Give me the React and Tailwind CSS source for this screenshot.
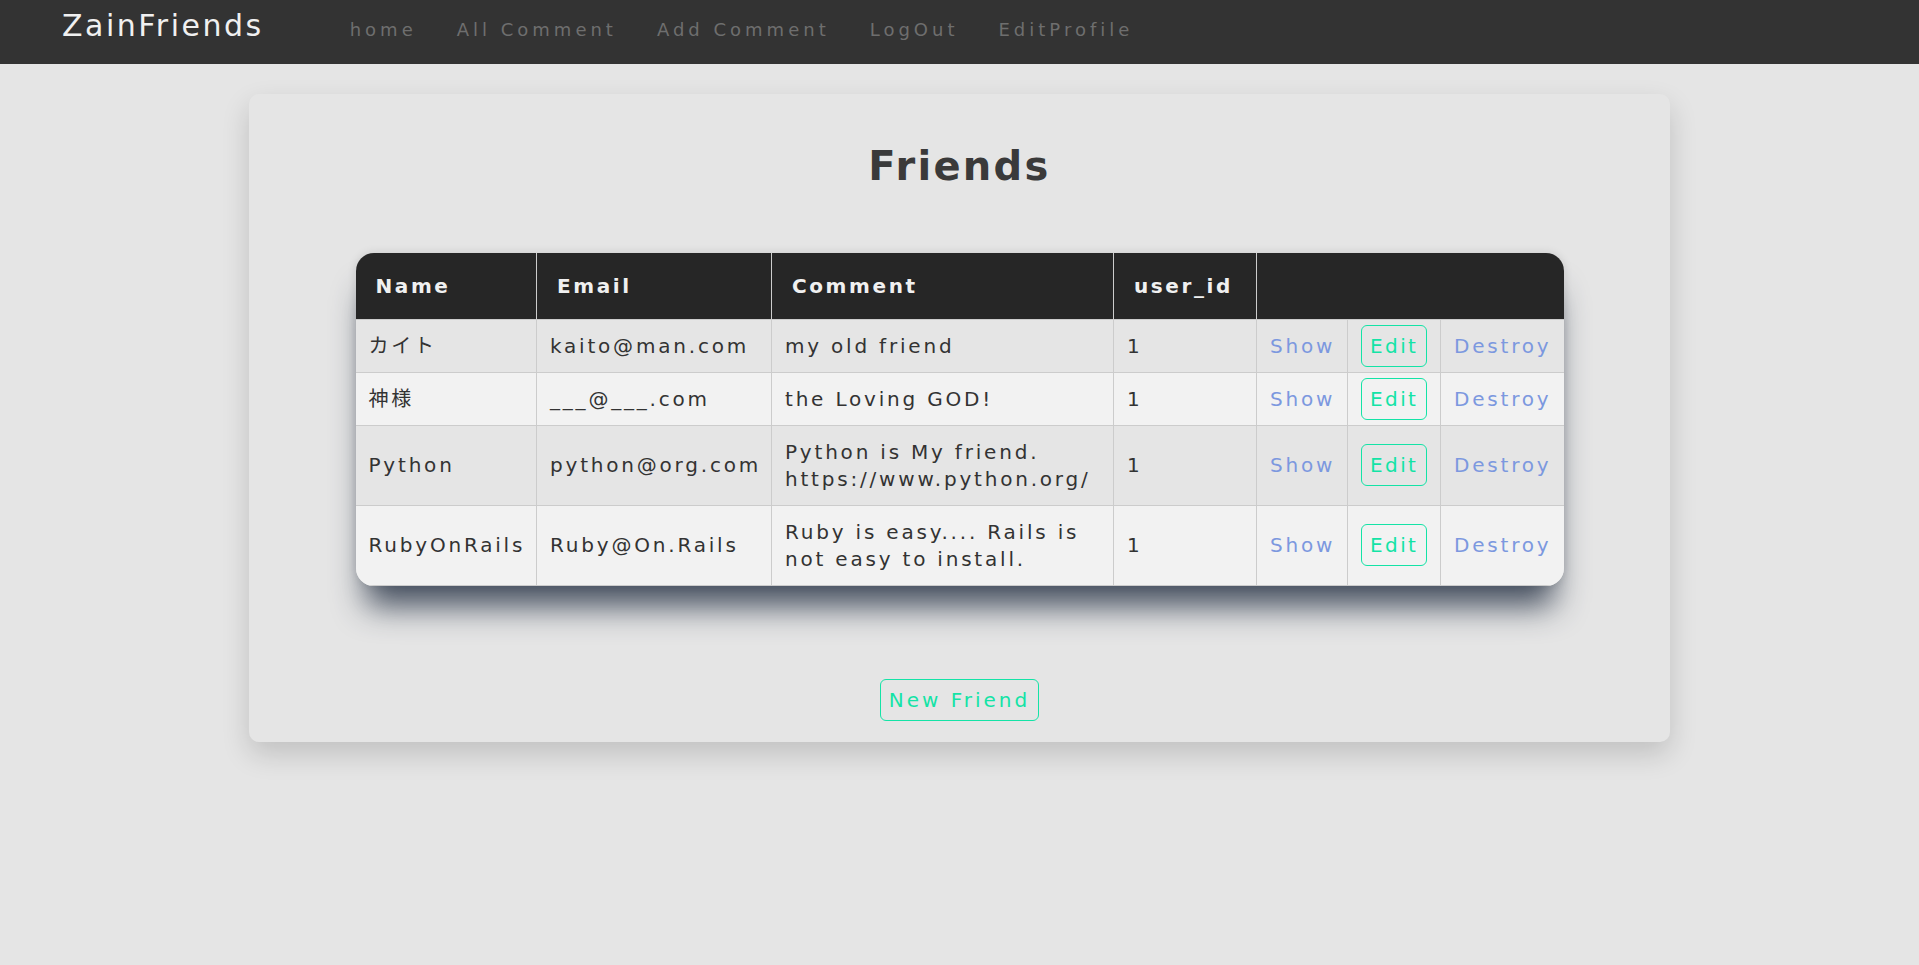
const friends = [
  { id: 1, name: "カイト", email: "kaito@man.com", comment: ["my old friend"], userId: 1 },
  { id: 2, name: "神様", email: "___@___.com", comment: ["the Loving GOD!"], userId: 1 },
  { id: 3, name: "Python", email: "python@org.com", comment: ["Python is My friend.", "https://www.python.org/"], userId: 1 },
  { id: 4, name: "RubyOnRails", email: "Ruby@On.Rails", comment: ["Ruby is easy.... Rails is", "not easy to install."], userId: 1 },
];

const navLinks = ["home", "All Comment", "Add Comment", "LogOut", "EditProfile"];

const App = () => {
  return (
    <div className="min-h-screen bg-[#e5e5e5] font-['DejaVu_Sans','Noto_Sans_CJK_JP',sans-serif] text-[#333]">
      {/* Navbar */}
      <nav className="h-16 bg-[#333333] flex items-baseline pt-2 pl-[62px]">
        <a className="text-[30px] leading-[36px] tracking-[2.5px] text-[#f0f0f0]">ZainFriends</a>
        <div className="ml-[86px] flex items-baseline gap-[40px]">
          {navLinks.map((link) => (
            <a key={link} className="text-[18px] tracking-[4px] text-[#6e6e6e]">
              {link}
            </a>
          ))}
        </div>
      </nav>

      {/* Card */}
      <div className="mx-auto mt-[30px] w-[1421px] rounded-[10px] bg-[#e5e5e5] pt-[48px] pb-[21px] shadow-[0_12px_28px_rgba(0,0,0,0.16)] text-center">
        <h1 className="text-[40px] leading-[48px] font-bold tracking-[2.3px] text-[#3a3a3a]">Friends</h1>

        <div className="mx-auto mt-[63px] w-[1208px] rounded-[18px] overflow-hidden text-left shadow-[0_30px_32px_-10px_rgba(45,57,75,0.88),0_0_10px_rgba(0,0,0,0.12)]">
          <table className="w-full table-fixed border-collapse text-[20px] tracking-[2.8px]">
            <colgroup>
              <col className="w-[181px]" />
              <col className="w-[235px]" />
              <col className="w-[342px]" />
              <col className="w-[143px]" />
              <col className="w-[91px]" />
              <col className="w-[93px]" />
              <col className="w-[123px]" />
            </colgroup>
            <thead className="bg-[#262626] text-[#f0f0f0]">
              <tr>
                <th className="border border-[#cccccc] border-t-0 border-l-0 px-5 py-5 leading-[26px] font-bold tracking-[2.6px]">Name</th>
                <th className="border border-[#cccccc] border-t-0 px-5 py-5 leading-[26px] font-bold tracking-[2.6px]">Email</th>
                <th className="border border-[#cccccc] border-t-0 px-5 py-5 leading-[26px] font-bold tracking-[2.6px]">Comment</th>
                <th className="border border-[#cccccc] border-t-0 px-5 py-5 leading-[26px] font-bold tracking-[2.6px]">user_id</th>
                <th colSpan="3" className="border border-[#cccccc] border-t-0 border-r-0 px-5 py-5"></th>
              </tr>
            </thead>
            <tbody>
              {friends.map((f, i) => (
                <tr key={f.id} className={i % 2 === 0 ? "bg-[#e5e5e5]" : "bg-[#f2f2f2]"}>
                  <td className="border border-[#cccccc] border-l-0 px-[13px] py-[12.5px] leading-[27px] whitespace-nowrap">{f.name}</td>
                  <td className="border border-[#cccccc] px-[13px] py-[12.5px] leading-[27px] whitespace-nowrap">{f.email}</td>
                  <td className="border border-[#cccccc] px-[13px] py-[12.5px] leading-[27px] whitespace-nowrap">
                    {f.comment.map((line, j) => (
                      <span key={j}>
                        {j > 0 && <br />}
                        {line}
                      </span>
                    ))}
                  </td>
                  <td className="border border-[#cccccc] px-[13px] py-[12.5px] leading-[27px]">{f.userId}</td>
                  <td className="border border-[#cccccc] px-[13px] py-[12.5px] leading-[27px]">
                    <a className="text-[#7c98df]">Show</a>
                  </td>
                  <td className="border border-[#cccccc] px-[13px] py-[12.5px] leading-[27px]">
                    <a className="rounded-[6px] border border-[#14e3a6] px-2 py-2 tracking-[2.4px] text-[#14e3a6]">Edit</a>
                  </td>
                  <td className="border border-[#cccccc] border-r-0 px-[13px] py-[12.5px] leading-[27px]">
                    <a className="text-[#7c98df]">Destroy</a>
                  </td>
                </tr>
              ))}
            </tbody>
          </table>
        </div>

        <a className="mt-[93px] inline-block rounded-[6px] border border-[#14e3a6] px-2 py-2 text-[20px] leading-[24px] tracking-[3px] text-[#14e3a6]">
          New Friend
        </a>
      </div>
    </div>
  );
};

export default App;
